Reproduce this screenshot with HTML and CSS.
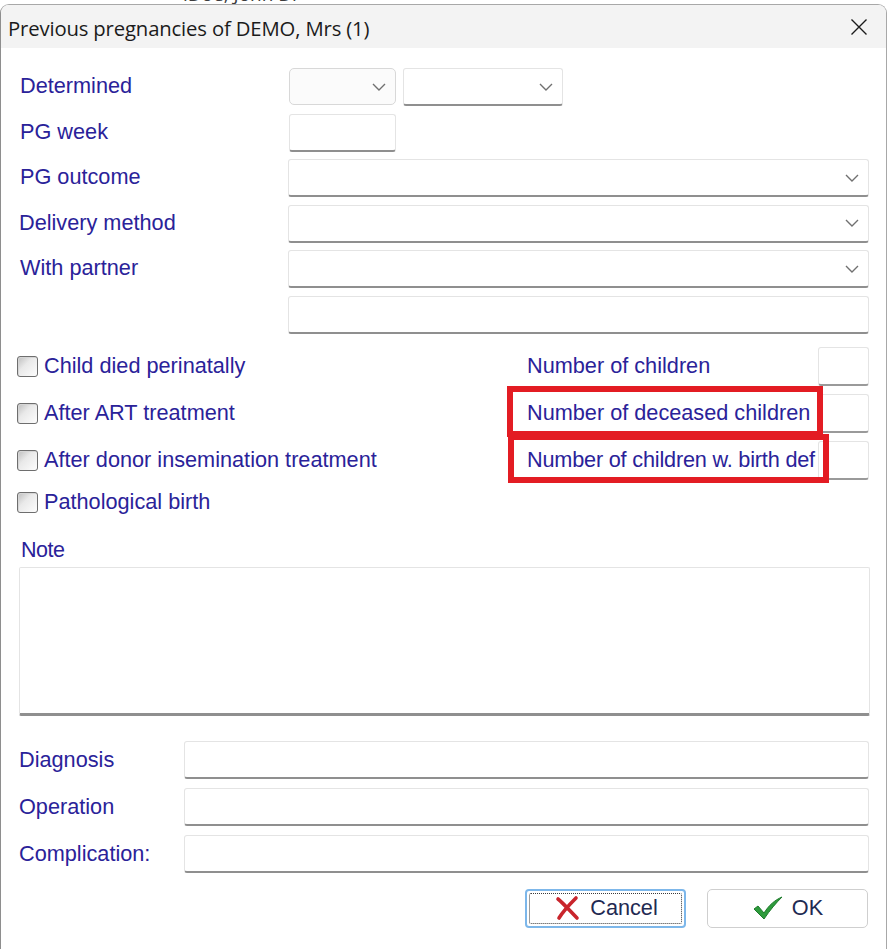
FILE: index.html
```html
<!DOCTYPE html>
<html lang="en">
<head>
<meta charset="utf-8">
<title>Previous pregnancies</title>
<link rel="stylesheet" href="styles.css">
</head>
<body>
<div class="backdrop"><span class="behind">iDoe, John Dr</span></div>
<div class="window">
  <div class="titlebar">
    <span class="title">Previous pregnancies of DEMO, Mrs (1)</span>
    <span class="close"><svg width="18" height="18" viewBox="0 0 18 18"><path d="M1.5 1.5 L16.5 16.5 M16.5 1.5 L1.5 16.5" stroke="#1b1b1b" stroke-width="1.4" fill="none"/></svg></span>
  </div>
  <div class="content">
    <div class="form-top">
      <div class="row">
        <span class="lbl">Determined</span>
        <div class="ctrls">
          <div class="combo combo-flat w-small"><svg class="chev" width="14" height="8" viewBox="0 0 14 8"><path d="M1 1 L7 7 L13 1" stroke="#707070" stroke-width="1.4" fill="none"/></svg></div>
          <div class="combo w-mid"><svg class="chev" width="14" height="8" viewBox="0 0 14 8"><path d="M1 1 L7 7 L13 1" stroke="#707070" stroke-width="1.4" fill="none"/></svg></div>
        </div>
      </div>
      <div class="row">
        <span class="lbl">PG week</span>
        <div class="ctrls"><div class="field w-small"></div></div>
      </div>
      <div class="row">
        <span class="lbl">PG outcome</span>
        <div class="ctrls"><div class="combo w-full"><svg class="chev" width="14" height="8" viewBox="0 0 14 8"><path d="M1 1 L7 7 L13 1" stroke="#707070" stroke-width="1.4" fill="none"/></svg></div></div>
      </div>
      <div class="row">
        <span class="lbl lbl-l1">Delivery method</span>
        <div class="ctrls"><div class="combo w-full"><svg class="chev" width="14" height="8" viewBox="0 0 14 8"><path d="M1 1 L7 7 L13 1" stroke="#707070" stroke-width="1.4" fill="none"/></svg></div></div>
      </div>
      <div class="row">
        <span class="lbl">With partner</span>
        <div class="ctrls"><div class="combo w-full"><svg class="chev" width="14" height="8" viewBox="0 0 14 8"><path d="M1 1 L7 7 L13 1" stroke="#707070" stroke-width="1.4" fill="none"/></svg></div></div>
      </div>
      <div class="row">
        <span class="lbl"></span>
        <div class="ctrls"><div class="field w-full"></div></div>
      </div>
    </div>

    <div class="flags">
      <div class="flag-row">
        <label class="check"><span class="box"></span><span class="ctext">Child died perinatally</span></label>
        <div class="num"><span class="ntext">Number of children</span><div class="field small-num"></div></div>
      </div>
      <div class="flag-row">
        <label class="check"><span class="box"></span><span class="ctext">After ART treatment</span></label>
        <div class="num"><span class="ntext">Number of deceased children</span><div class="field small-num"></div><span class="mark mark-a"></span></div>
      </div>
      <div class="flag-row">
        <label class="check"><span class="box"></span><span class="ctext">After donor insemination treatment</span></label>
        <div class="num"><span class="ntext tight">Number of children w. birth def</span><div class="field small-num"></div><span class="mark mark-b"></span></div>
      </div>
      <div class="flag-row last">
        <label class="check"><span class="box"></span><span class="ctext">Pathological birth</span></label>
      </div>
    </div>

    <div class="note">
      <span class="note-lbl">Note</span>
      <div class="field note-area"></div>
    </div>

    <div class="form-bottom">
      <div class="brow"><span class="lbl">Diagnosis</span><div class="field w-grow"></div></div>
      <div class="brow"><span class="lbl">Operation</span><div class="field w-grow"></div></div>
      <div class="brow"><span class="lbl">Complication:</span><div class="field w-grow"></div></div>
    </div>

    <div class="buttons">
      <button class="btn btn-focus">
        <svg width="26" height="26" viewBox="0 0 26 26"><path d="M3 4 C8 8 14 15 22 23 M21 3 C15 9 9 15 4 23" stroke="#c9252c" stroke-width="3.6" stroke-linecap="round" fill="none"/></svg>
        <span>Cancel</span>
      </button>
      <button class="btn">
        <svg width="32" height="26" viewBox="0 0 32 26"><path d="M2 14 L6 11 L12 18 C17 10 23 5 30 2 C24 8 18 15 12 24 Z" fill="#2e9b3c" stroke="#1d7a2b" stroke-width="1" stroke-linejoin="round"/></svg>
        <span>OK</span>
      </button>
    </div>
  </div>
</div>
</body>
</html>
```

FILE: styles.css
```css
* { box-sizing: border-box; }

html, body {
  margin: 0;
  padding: 0;
  background: #ffffff;
  width: 889px;
  height: 949px;
  overflow: hidden;
}

.backdrop {
  height: 4px;
  overflow: hidden;
  padding-left: 183px;
}

.behind {
  display: block;
  margin-top: -16px;
  font-family: "Open Sans", "Noto Sans", sans-serif;
  font-size: 19px;
  line-height: 20px;
  color: #3c3c3c;
}

.window {
  width: 887px;
  height: 945px;
  border: 1px solid #a8a8a8;
  border-left-color: #8e8e8e;
  border-bottom: none;
  border-radius: 9px 9px 0 0;
  background: #ffffff;
  overflow: hidden;
}

.titlebar {
  height: 43px;
  background: #f3f3f3;
  display: flex;
  align-items: center;
  justify-content: space-between;
  padding: 0 18px 0 7px;
}

.title {
  font-family: "Open Sans", "Noto Sans", sans-serif;
  font-size: 20.3px;
  color: #1b1b1b;
  letter-spacing: -0.15px;
  padding-top: 2px;
}

.close {
  display: flex;
  width: 18px;
  height: 18px;
  margin-top: 1px;
}

.content {
  padding: 0 17px 0 17px;
  font-family: "Liberation Sans", Arial, sans-serif;
}

.lbl, .ctext, .ntext, .note-lbl {
  font-family: "Liberation Sans", Arial, sans-serif;
  font-size: 21.7px;
  color: #2a2299;
  white-space: nowrap;
}

/* top form */
.form-top {
  padding-top: 20px;
  display: flex;
  flex-direction: column;
  gap: 7.5px;
}

.row {
  display: flex;
  align-items: center;
  height: 38px;
}

.row .lbl {
  width: 271px;
  padding-left: 2px;
  padding-bottom: 2px;
}

.row .lbl-l1 { padding-left: 1px; }

.ctrls {
  display: flex;
  gap: 7px;
  align-items: flex-start;
  height: 38px;
}

.field, .combo {
  background: #ffffff;
  border: 1px solid #e4e4e4;
  border-bottom: 2px solid #8f8f8f;
  border-radius: 3px;
  height: 38px;
  position: relative;
}

.combo {
  display: flex;
  align-items: center;
  justify-content: flex-end;
  padding-right: 9px;
}

.combo-flat {
  background: #fbfbfb;
  border: 1px solid #d8d8d8;
  border-radius: 5px;
  height: 37px;
}

.w-small { width: 107px; }
.w-mid { width: 160px; }
.w-full { width: 581px; }

/* flags */
.flags {
  margin-top: 13.5px;
  display: flex;
  flex-direction: column;
  gap: 8px;
}

.flag-row {
  display: flex;
  align-items: center;
  justify-content: space-between;
  height: 39px;
}

.flag-row.last {
  margin-top: -5.5px;
}

.check {
  display: flex;
  align-items: center;
  gap: 6px;
  margin-left: -1px;
  padding-bottom: 0;
}

.ctext { padding-bottom: 1px; }

.box {
  width: 21px;
  height: 21px;
  border: 1px solid #6e6e6e;
  border-radius: 3px;
  background: linear-gradient(135deg, #bdbdbd 0%, #e9e9e9 40%, #fdfdfd 100%);
  box-shadow: inset 1px 1px 0 #d6d6d6;
}

.num {
  position: relative;
  display: flex;
  align-items: center;
  width: 342px;
  height: 39px;
  justify-content: space-between;
}

.ntext {
  padding-bottom: 1px;
}

.ntext.tight {
  letter-spacing: -0.2px;
}

.small-num {
  width: 51px;
  height: 39px;
  border-radius: 3px;
  border-bottom: 2px solid #9a9a9a;
}

.mark {
  position: absolute;
  border: 6px solid #e31c23;
}

.mark-a {
  left: -20px;
  top: -8px;
  width: 316px;
  height: 51px;
}

.mark-b {
  left: -19px;
  top: -7px;
  width: 321px;
  height: 49px;
}

/* note */
.note {
  margin-top: 15px;
  display: flex;
  flex-direction: column;
  gap: 4px;
}

.note-lbl {
  font-family: "Liberation Sans Narrow", "Liberation Sans", Arial, sans-serif;
  padding-left: 3px;
  font-size: 21.5px;
  line-height: 26px;
  letter-spacing: -0.5px;
}

.note-area {
  width: 851px;
  height: 149px;
  margin-left: 1px;
  border-radius: 2px;
  border-bottom: 3px solid #8f8f8f;
}

/* bottom */
.form-bottom {
  margin-top: 25px;
  display: flex;
  flex-direction: column;
  gap: 9px;
}

.brow {
  display: flex;
  align-items: center;
  height: 38px;
}

.brow .lbl {
  width: 166px;
  padding-left: 1px;
  padding-bottom: 0;
}

.w-grow {
  flex: 1;
  height: 38px;
}

/* buttons */
.buttons {
  margin-top: 16px;
  display: flex;
  justify-content: flex-end;
  gap: 21px;
  padding-right: 1px;
}

.btn {
  position: relative;
  width: 161px;
  height: 39px;
  background: #ffffff;
  border: 1px solid #cfcfcf;
  border-radius: 5px;
  display: flex;
  align-items: center;
  justify-content: center;
  gap: 8px;
  font-family: "Liberation Sans", Arial, sans-serif;
  font-size: 21.7px;
  color: #1f2a52;
  padding: 0 0 0 0;
}

.btn span {
  padding-bottom: 1px;
}

.btn-focus {
  border: 2px solid #7db7ea;
  border-radius: 4px;
  gap: 9px;
  padding-left: 2px;
}

.btn-focus::after {
  content: "";
  position: absolute;
  inset: 2px;
  border: 1.5px dotted #3a3a3a;
  border-radius: 2px;
}
```
